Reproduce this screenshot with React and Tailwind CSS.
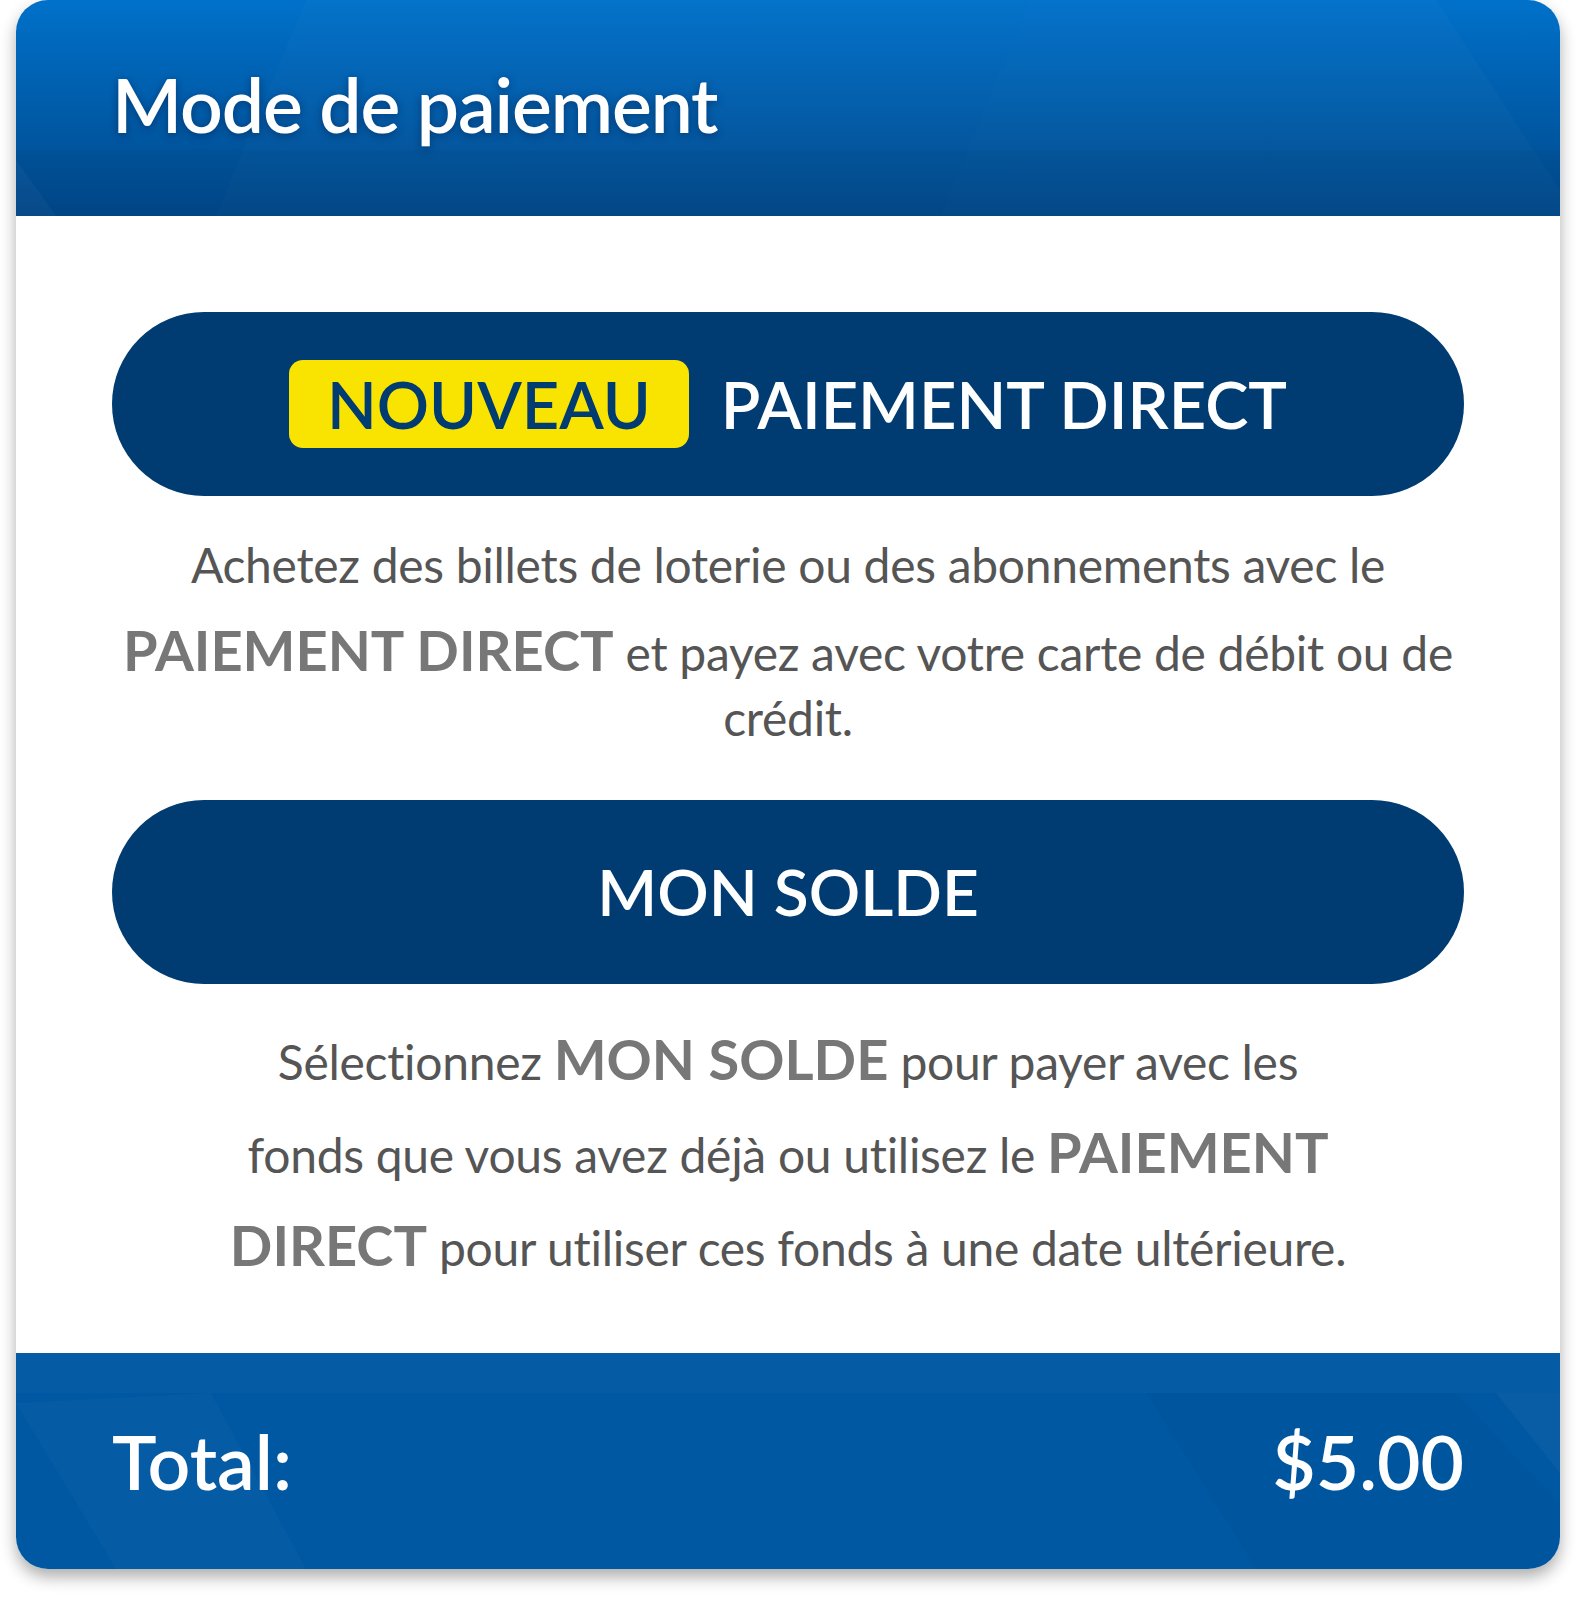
import React from "react";

function Big({ children }) {
  return (
    <span className="inline-block align-baseline pt-[17px] text-[56px] leading-[76px] font-bold tracking-normal text-[#777777]">
      {children}
    </span>
  );
}

function HeaderShapes() {
  return (
    <svg
      className="absolute inset-0 h-full w-full"
      viewBox="0 0 1544 216"
      preserveAspectRatio="none"
      aria-hidden="true"
    >
      <polygon points="290,0 1012,0 924,216 200,216" fill="#ffffff" fillOpacity="0.015" />
      <polygon points="1012,0 1420,0 1544,190 1544,216 924,216" fill="#ffffff" fillOpacity="0.02" />
      <polygon points="0,150 1544,150 1544,216 0,216" fill="#000000" fillOpacity="0.03" />
      <polygon points="0,160 40,216 0,216" fill="#ffffff" fillOpacity="0.03" />
    </svg>
  );
}

function FooterShapes() {
  return (
    <svg
      className="absolute inset-0 h-full w-full"
      viewBox="0 0 1544 216"
      preserveAspectRatio="none"
      aria-hidden="true"
    >
      <polygon points="0,0 1544,0 1544,40 0,40" fill="#ffffff" fillOpacity="0.02" />
      <polygon points="0,50 195,40 290,216 100,216" fill="#ffffff" fillOpacity="0.02" />
      <polygon points="1130,40 1440,40 1544,150 1544,216 1240,216" fill="#000000" fillOpacity="0.025" />
      <polygon points="1480,40 1544,40 1544,120" fill="#ffffff" fillOpacity="0.03" />
    </svg>
  );
}

export default function App() {
  return (
    <div className="min-h-[1600px] bg-white font-[Lato,'Noto_Sans',sans-serif]">
      <div className="mx-4 flex flex-col overflow-hidden rounded-[32px] bg-white shadow-[0_8px_16px_rgba(0,0,0,0.32)]">
        {/* Header */}
        <div className="relative flex h-[216px] items-center bg-linear-to-b from-[#0071ca] to-[#00488a] px-[96px] pb-[8px]">
          <HeaderShapes />
          <h1 className="relative text-[75px] font-semibold leading-none tracking-[-1.1px] text-white [text-shadow:0_2px_8px_rgba(0,20,60,0.45)]">
            Mode de paiement
          </h1>
        </div>

        {/* Body */}
        <div className="flex flex-col px-[96px] pt-[96px] pb-[70px]">
          <button className="flex h-[184px] w-full items-center justify-center gap-8 rounded-full bg-[#003c71]">
            <span className="flex h-[88px] items-center rounded-[14px] bg-[#f9e300] px-[38px] text-[65px] font-semibold leading-none text-[#003c71]">
              NOUVEAU
            </span>
            <span className="text-[65px] font-semibold leading-none text-white">
              PAIEMENT DIRECT
            </span>
          </button>

          <p className="mt-[39px] whitespace-nowrap text-center text-[48px] leading-[60px] tracking-[-0.3px] text-[#555555]">
            Achetez des billets de loterie ou des abonnements avec le
            <br />
            <Big>PAIEMENT DIRECT</Big> et payez avec votre carte de débit ou de
            <br />
            crédit.
          </p>

          <button className="mt-[52px] flex h-[184px] w-full items-center justify-center rounded-full bg-[#003c71]">
            <span className="text-[64px] font-semibold leading-none text-white">
              MON SOLDE
            </span>
          </button>

          <p className="mt-[20px] whitespace-nowrap text-center text-[48px] leading-[60px] tracking-[-0.3px] text-[#555555]">
            Sélectionnez <Big>MON SOLDE</Big> pour payer avec les
            <br />
            fonds que vous avez déjà ou utilisez le <Big>PAIEMENT</Big>
            <br />
            <Big>DIRECT</Big> pour utiliser ces fonds à une date ultérieure.
          </p>
        </div>

        {/* Footer */}
        <div className="relative flex h-[216px] items-center justify-between bg-[#0058a3] px-[96px]">
          <FooterShapes />
          <span className="relative text-[75px] font-semibold leading-none text-white">
            Total:
          </span>
          <span className="relative text-[75px] font-semibold leading-none text-white">
            $5.00
          </span>
        </div>
      </div>
    </div>
  );
}
